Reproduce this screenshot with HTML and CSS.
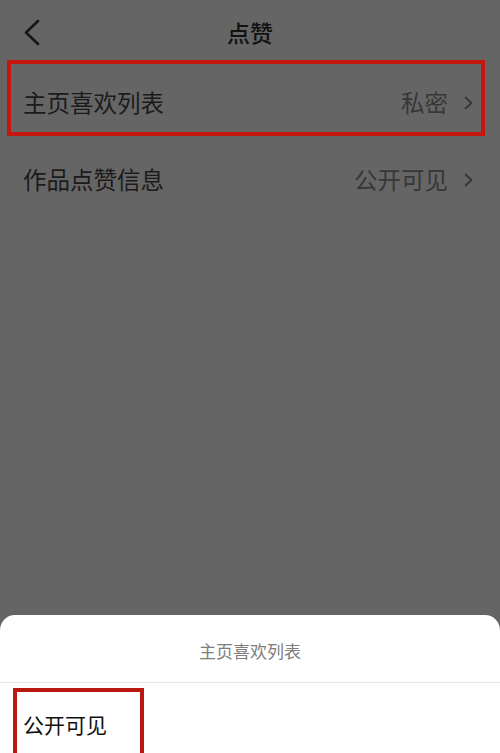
FILE: index.html
```html
<!DOCTYPE html>
<html lang="zh-CN">
<head>
<meta charset="utf-8">
<title>点赞</title>
<link rel="stylesheet" href="styles.css">
</head>
<body>
<div class="page">
  <header class="header">
    <svg class="back" width="16" height="27" viewBox="0 0 16 27"><polyline points="14,2 2,13.5 14,25" fill="none" stroke="#161616" stroke-width="2.6" stroke-linecap="round" stroke-linejoin="round"/></svg>
    <div class="title">点赞</div>
  </header>
  <div class="list">
    <div class="row marked">
      <span class="label">主页喜欢列表</span>
      <span class="value">私密</span>
      <svg class="arrow" width="9" height="14" viewBox="0 0 9 14"><polyline points="1.5,1.5 7.5,7 1.5,12.5" fill="none" stroke="#363636" stroke-width="1.8" stroke-linecap="round" stroke-linejoin="round"/></svg>
    </div>
    <div class="row">
      <span class="label">作品点赞信息</span>
      <span class="value">公开可见</span>
      <svg class="arrow" width="9" height="14" viewBox="0 0 9 14"><polyline points="1.5,1.5 7.5,7 1.5,12.5" fill="none" stroke="#363636" stroke-width="1.8" stroke-linecap="round" stroke-linejoin="round"/></svg>
    </div>
  </div>
  <div class="sheet">
    <div class="sheet-title">主页喜欢列表</div>
    <div class="option"><span class="option-text">公开可见</span></div>
  </div>
</div>
</body>
</html>
```
FILE: styles.css
```css
html, body {
  margin: 0;
  padding: 0;
}
body {
  background: #656565;
  font-family: "Noto Sans CJK SC", "Noto Sans", sans-serif;
}
.page {
  width: 500px;
  height: 753px;
  display: flex;
  flex-direction: column;
  overflow: hidden;
}
.header {
  position: relative;
  height: 64px;
  padding-bottom: 0;
  box-sizing: border-box;
  display: flex;
  align-items: center;
  justify-content: center;
}
.back {
  position: absolute;
  left: 24px;
  top: 19px;
}
.title {
  font-size: 23px;
  font-weight: 500;
  color: #121212;
  line-height: 1;
  margin-bottom: 0;
}
.list {
  display: flex;
  flex-direction: column;
}
.row {
  position: relative;
  height: 77px;
  display: flex;
  align-items: center;
  padding: 0 27px 0 23px;
}
.row.marked::after {
  content: "";
  position: absolute;
  left: 7px;
  right: 15px;
  top: -4px;
  height: 76px;
  box-sizing: border-box;
  border: 4.5px solid #c4160d;
}
.label {
  flex: 1;
  font-size: 23.5px;
  color: #1b1b1b;
  line-height: 1;
}
.value {
  font-size: 23.5px;
  color: #373737;
  line-height: 1;
  margin-right: 16px;
}
.arrow {
  display: block;
}
.sheet {
  margin-top: auto;
  height: 138px;
  background: #ffffff;
  border-radius: 15px 15px 0 0;
  display: flex;
  flex-direction: column;
  overflow: hidden;
}
.sheet-title {
  height: 68px;
  flex: none;
  display: flex;
  align-items: center;
  justify-content: center;
  font-size: 17px;
  color: #7e7e7e;
  border-bottom: 1px solid #e8e8e8;
  box-sizing: border-box;
  padding-top: 3px;
}
.option {
  position: relative;
  height: 82px;
  flex: none;
  display: flex;
  align-items: center;
  padding-left: 23px;
}
.option::after {
  content: "";
  position: absolute;
  left: 13px;
  top: 5px;
  width: 131px;
  height: 80px;
  box-sizing: border-box;
  border: 4.5px solid #b9170f;
}
.option-text {
  font-size: 21px;
  color: #111111;
  line-height: 1;
}
```
